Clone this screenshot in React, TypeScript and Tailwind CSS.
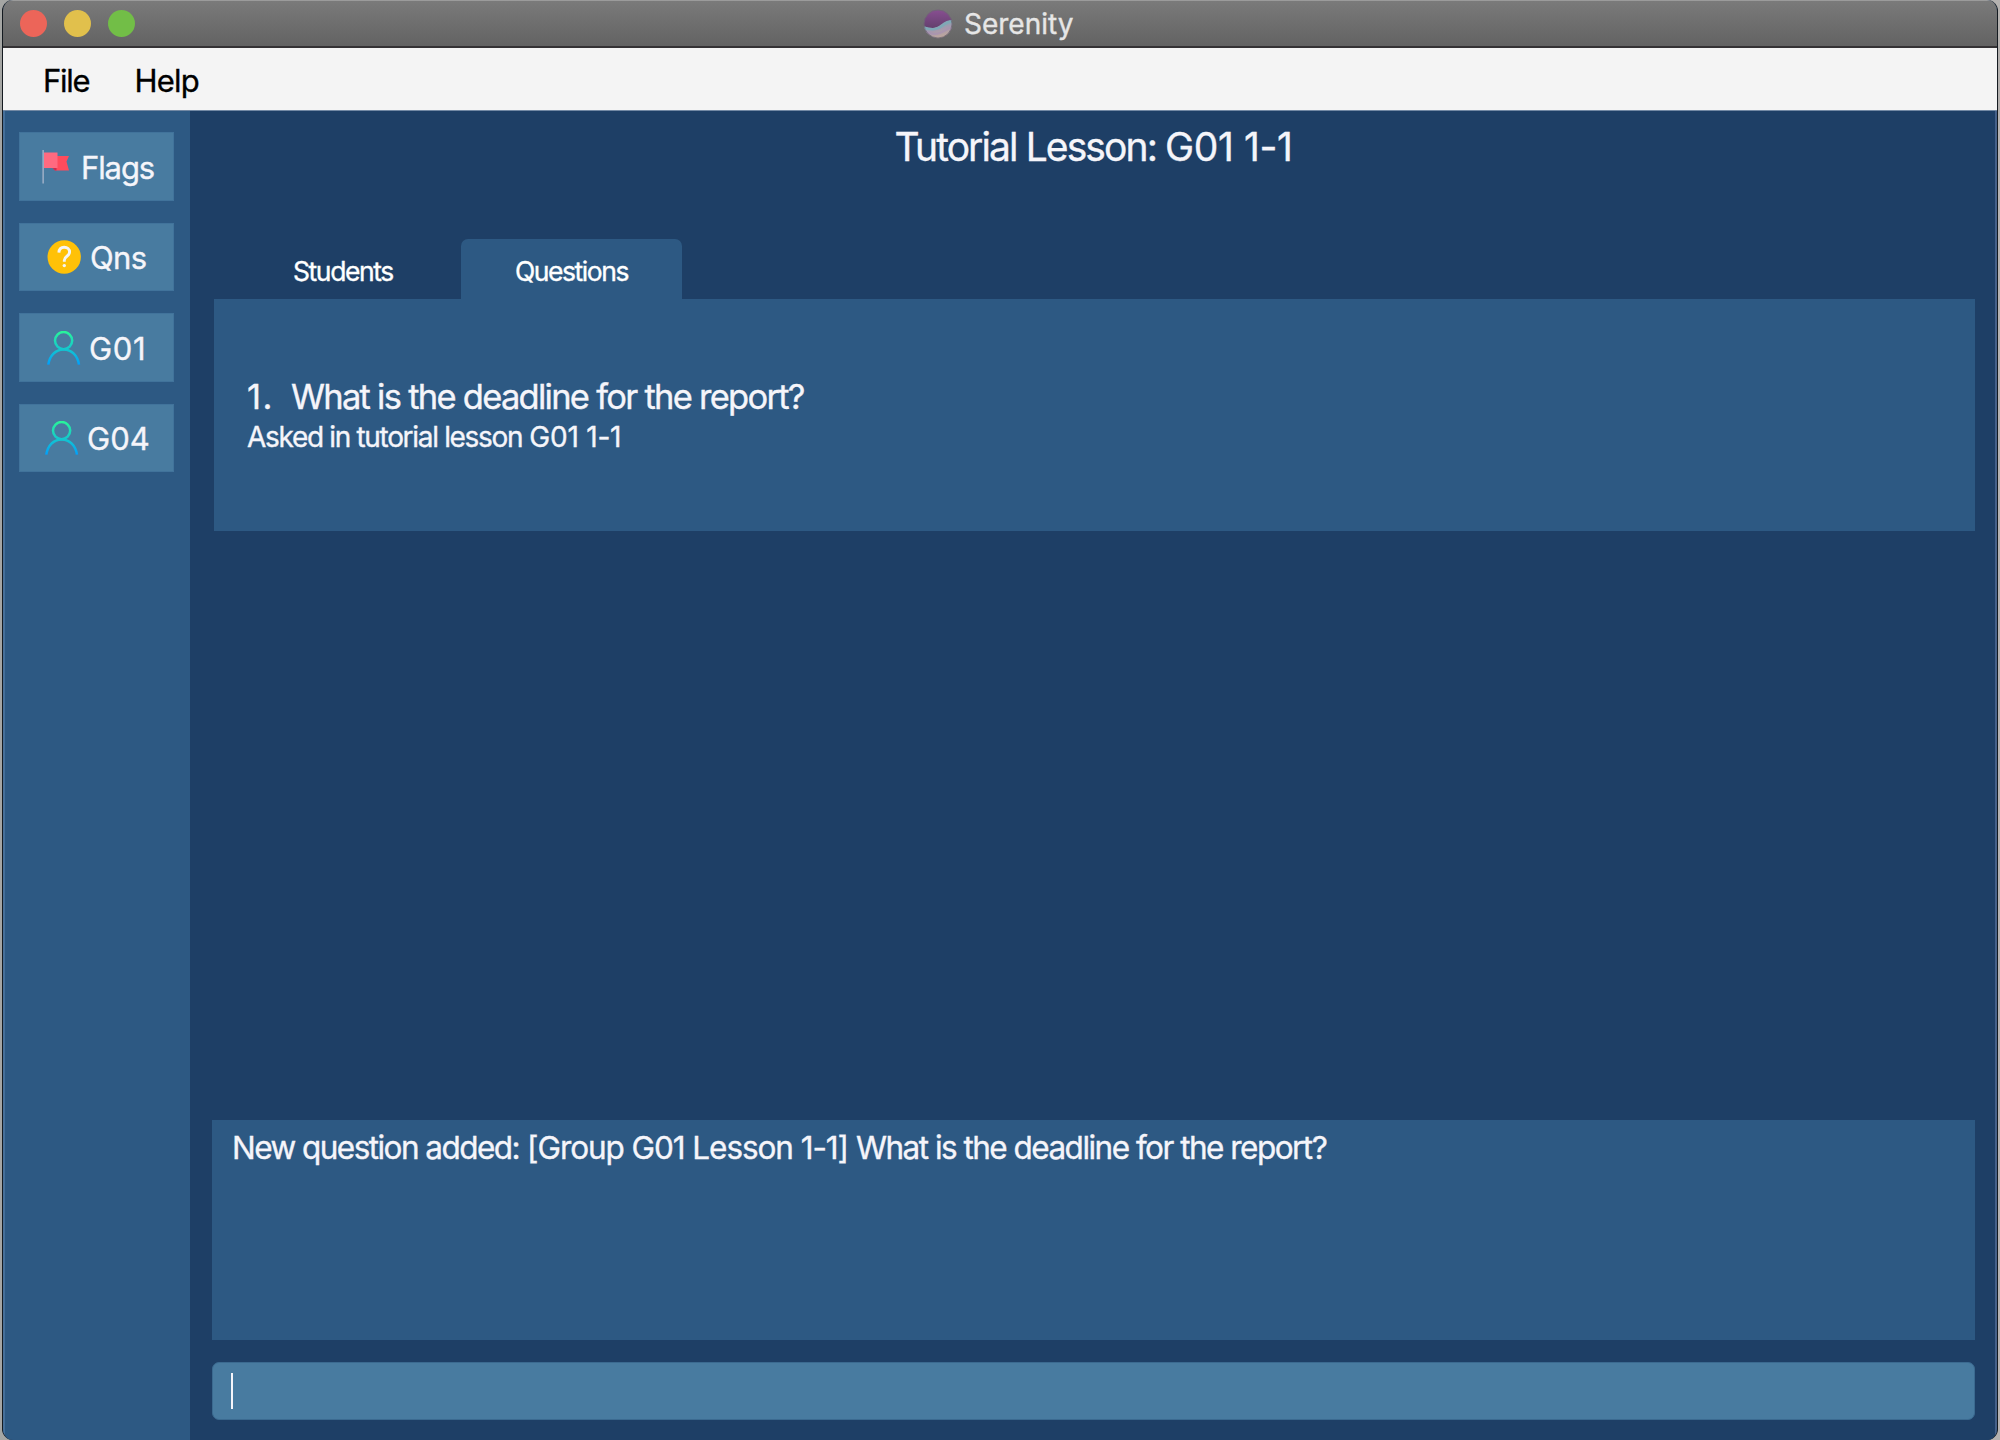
import React from "react";

function FlagIcon() {
  return (
    <svg width="28" height="34" viewBox="0 0 28 34" className="shrink-0">
      <path d="M10 6H27L24.5 11.5L27 20.5H13L10 17.5Z" fill="#ff4b5c" />
      <path d="M10 17.5H14.5V20.5H13Z" fill="#c92d50" />
      <rect x="1.5" y="2.5" width="14" height="15.5" fill="#ff6a80" />
      <rect x="0.3" y="0" width="1.7" height="33.5" fill="#93a9c2" />
    </svg>
  );
}

function QuestionIcon() {
  return (
    <svg width="34" height="34" viewBox="0 0 34 34" className="shrink-0">
      <circle cx="17.2" cy="17" r="16.7" fill="#ffc107" />
      <path
        d="M11.9 12.7C12.1 9.3 14.2 7.3 17.2 7.3C20.4 7.3 22.6 9.3 22.6 12.1C22.6 16.4 17.3 16 17.3 20.2V21.8"
        fill="none"
        stroke="#f5f5f5"
        strokeWidth="2.9"
      />
      <circle cx="17.3" cy="25.6" r="1.7" fill="#f5f5f5" />
    </svg>
  );
}

function PersonIcon() {
  return (
    <svg width="34" height="34" viewBox="0 0 34 34" className="shrink-0">
      <defs>
        <linearGradient id="person" x1="0" y1="0" x2="0" y2="34" gradientUnits="userSpaceOnUse">
          <stop offset="0" stopColor="#2af598" />
          <stop offset="1" stopColor="#009efd" />
        </linearGradient>
      </defs>
      <g fill="none" stroke="url(#person)" strokeWidth="2.5">
        <circle cx="16.6" cy="9.6" r="8.6" />
        <path d="M1.3 33.6C2.7 24.4 8.6 18.4 16.6 18.4S30.6 24.4 32 33.6" />
      </g>
    </svg>
  );
}

function SerenityIcon() {
  return (
    <svg width="30" height="30" viewBox="0 0 30 30" className="shrink-0">
      <defs>
        <linearGradient id="sky" x1="0" y1="0" x2="0" y2="1">
          <stop offset="0" stopColor="#8a4f93" />
          <stop offset="1" stopColor="#4e3858" />
        </linearGradient>
        <linearGradient id="sea" x1="0" y1="0" x2="0.4" y2="1">
          <stop offset="0.3" stopColor="#7fa9b8" />
          <stop offset="0.6" stopColor="#a499ae" />
          <stop offset="1" stopColor="#bfa79c" />
        </linearGradient>
        <clipPath id="ball">
          <circle cx="15" cy="15" r="14.2" />
        </clipPath>
      </defs>
      <g clipPath="url(#ball)">
        <rect width="30" height="30" fill="url(#sky)" />
        <path d="M0 17C9 20 13 19.5 18 15.5C22 12.3 25 11 30 11V30H0Z" fill="url(#sea)" />
        <path d="M0 18.5C9 21.5 14 21 19 17C23 13.8 26 12.5 30 12.5" fill="none" stroke="#7fa9b6" strokeWidth="2.6" />
        <path d="M3 23C10 26 17 25 22 21.5C25 19.5 27 19 30 18.5" fill="none" stroke="#a78fb4" strokeWidth="2" opacity="0.6" />
      </g>
      <circle cx="15" cy="15" r="14" fill="none" stroke="#6d6873" strokeWidth="0.8" />
    </svg>
  );
}

const button =
  "flex w-[155px] items-center border border-[#41739b] bg-[#487ba0] text-[31px] leading-none text-[#f5f5fa] [-webkit-text-stroke:0.35px]";

export default function App() {
  return (
    <div className="h-[1440px] w-[2000px] overflow-hidden bg-[linear-gradient(to_right,#a5a6a4_0,#a5a6a4_50%,#b5b2b0_50%)] pl-[2px] pr-[2px] font-['Inter',sans-serif]">
      <div className="flex h-full flex-col overflow-hidden rounded-[11px] border-x border-[#141a20] bg-[#1e3f66]">
        <header className="flex h-[48px] shrink-0 items-center border-b-2 border-t border-b-[#343234] border-t-[#9b9b9b] bg-linear-to-b from-[#7a7a7a] to-[#636363] pl-[17px]">
          <div className="flex w-[903px] gap-[17px]">
            <span className="size-[27px] rounded-full bg-[#ec6559]" />
            <span className="size-[27px] rounded-full bg-[#e1c04c]" />
            <span className="size-[27px] rounded-full bg-[#72be47]" />
          </div>
          <SerenityIcon />
          <span className="ml-[11px] pt-px text-[28px] leading-none text-[#e6e6e6] [-webkit-text-stroke:0.35px]">
            Serenity
          </span>
        </header>

        <nav className="flex h-[62px] shrink-0 items-center bg-[#f4f4f4] pl-[40px] pt-[2px] text-[31px] leading-none text-black [-webkit-text-stroke:0.35px]">
          <span className="w-[91.5px] tracking-[-1.3px]">File</span>
          <span className="tracking-[-0.75px]">Help</span>
        </nav>

        <div className="flex min-h-0 flex-1 border-t border-[#7389a4]">
          <aside className="flex w-[187px] shrink-0 flex-col gap-[22px] border-l-2 border-[#46709a] bg-[#2d5983] pl-[14px] pt-[21px]">
            <button className={`${button} h-[69px] pl-[22px]`}>
              <FlagIcon />
              <span className="ml-[11px] pt-px tracking-[-1.1px]">Flags</span>
            </button>
            <button className={`${button} h-[68px] pl-[27px]`}>
              <QuestionIcon />
              <span className="ml-[9px] tracking-[-0.6px]">Qns</span>
            </button>
            <button className={`${button} h-[69px] pl-[27px]`}>
              <PersonIcon />
              <span className="ml-[8px] pt-px tracking-[0.6px]">G01</span>
            </button>
            <button className={`${button} h-[68px] pl-[25px]`}>
              <PersonIcon />
              <span className="ml-[8px]">G04</span>
            </button>
          </aside>

          <main className="flex flex-1 flex-col border-r-2 border-[#46618a] bg-[#1e3f66] pl-[22px] pr-[20px] text-[#f5f5fa] [-webkit-text-stroke:0.35px]">
            <h1 className="flex h-[128px] shrink-0 items-start justify-center gap-[9px] pt-[16px] text-[39px] leading-[40px]">
              <span className="tracking-[-1.9px]">Tutorial Lesson:</span>
              <span className="tracking-[-0.4px]">G01 1-1</span>
            </h1>

            <div className="ml-[2px] flex h-[60px] shrink-0 text-[26.5px] leading-none text-white">
              <div className="flex w-[247px] items-center pl-[79px] pt-[5px] tracking-[-1.4px]">Students</div>
              <div className="flex w-[221px] items-center rounded-t-[7px] bg-[#2d5983] pl-[54px] pt-[5px] tracking-[-1.45px]">
                Questions
              </div>
            </div>

            <section className="ml-[2px] h-[232px] shrink-0 bg-[#2d5983] pl-[33px] pt-[78px]">
              <div className="flex text-[34.5px] leading-[40px]">
                <span className="w-[44px] tracking-[1.4px]">1.</span>
                <span className="tracking-[-1.73px]">What is the deadline for the report?</span>
              </div>
              <div className="flex gap-[7px] text-[28px] leading-[40px]">
                <span className="tracking-[-1.32px]">Asked in tutorial lesson</span>
                <span className="tracking-[-0.2px]">G01 1-1</span>
              </div>
            </section>

            <section className="mt-[589px] flex h-[220px] shrink-0 gap-[8px] bg-[#2d5983] pl-[20px] pt-[8px] text-[31.5px] leading-[40px]">
              <span className="tracking-[-1.54px]">New question added:</span>
              <span className="tracking-[-1.07px]">[Group G01 Lesson 1-1]</span>
              <span className="tracking-[-1.52px]">What is the deadline for the report?</span>
            </section>

            <div className="mt-[22px] flex h-[58px] shrink-0 items-center rounded-[7px] border border-[#3b6a90] bg-[#487ba0] pl-[18px]">
              <span className="h-[36px] w-[2px] bg-[#f5f5fa]" />
            </div>
          </main>
        </div>
      </div>
    </div>
  );
}
